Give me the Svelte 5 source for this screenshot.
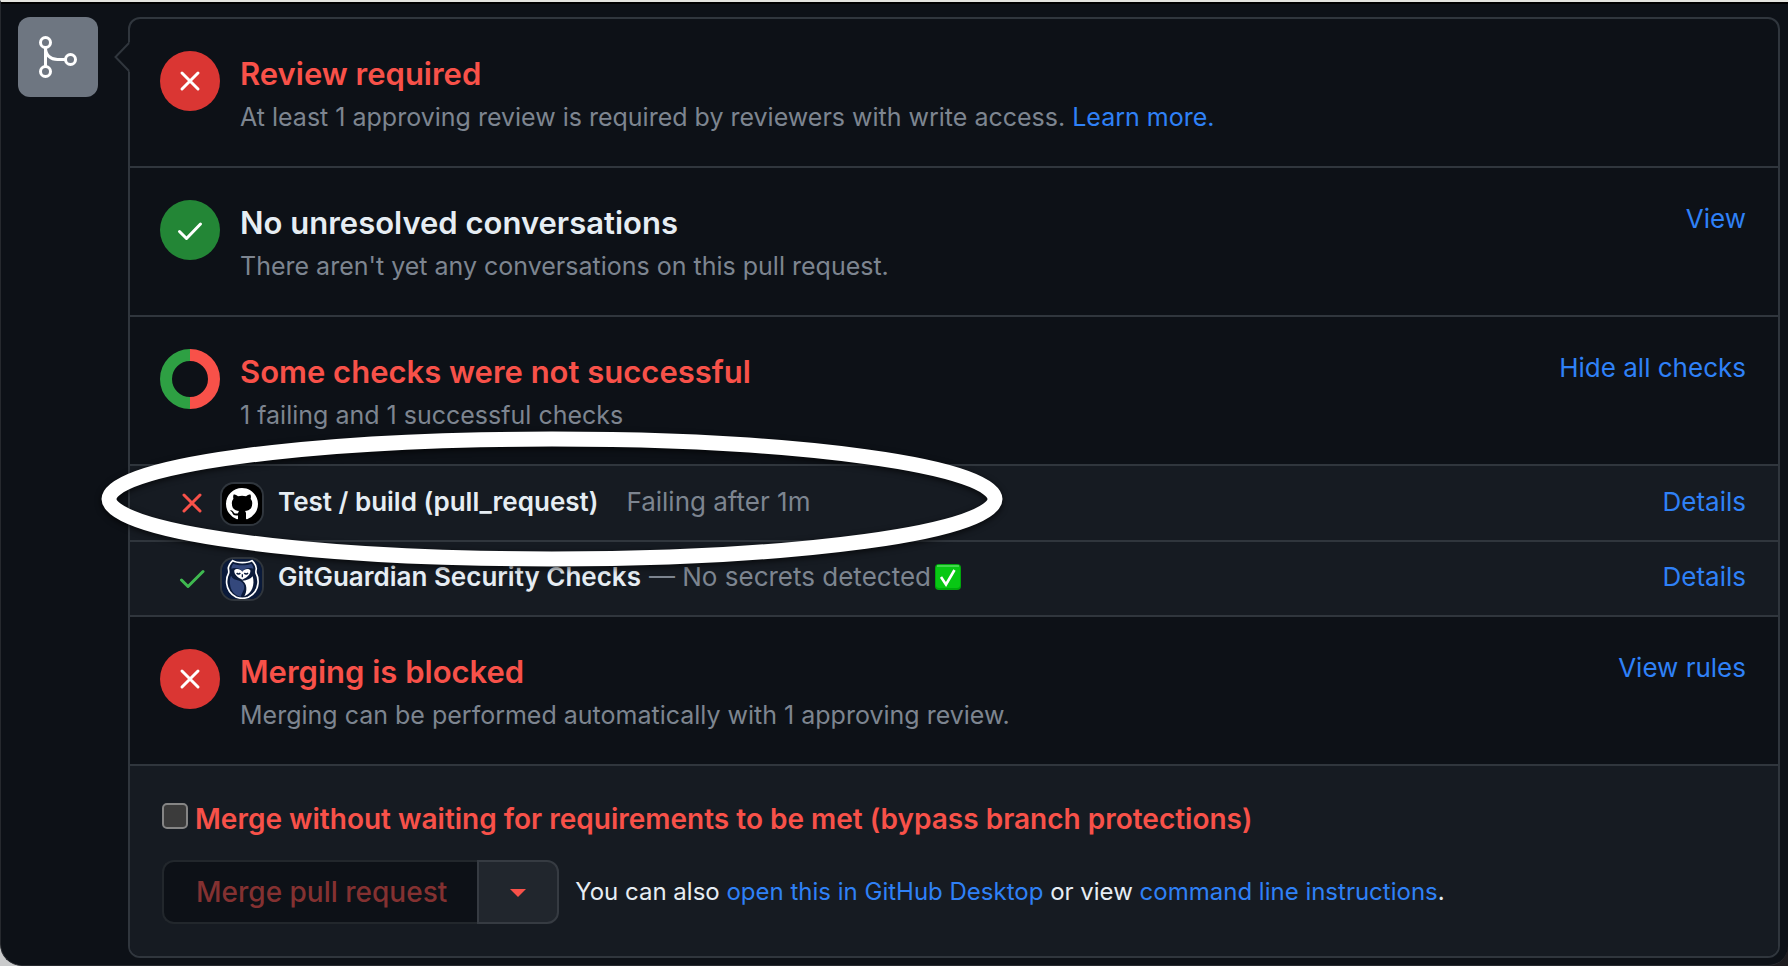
<script>
  const checks = [
    { ok: false, app: 'github', name: 'Test / build (pull_request)', note: 'Failing after 1m' },
    { ok: true, app: 'gitguardian', name: 'GitGuardian Security Checks', note: 'No secrets detected' }
  ];
  let bypass = $state(false);
</script>

{#snippet badge(ok)}
  <span class="badge" class:ok>
    <svg viewBox="0 0 60 60" aria-hidden="true">
      {#if ok}
        <path d="M19.5 31.5l7 7L40.5 24" />
      {:else}
        <path d="M22 22l16 16M38 22L22 38" />
      {/if}
    </svg>
  </span>
{/snippet}

<div class="window">
  <div class="timeline-icon">
    <svg viewBox="0 0 80 80" aria-hidden="true">
      <circle cx="27.5" cy="25.5" r="5" />
      <circle cx="27.5" cy="54.5" r="5" />
      <circle cx="52.5" cy="42.5" r="5" />
      <path d="M27.5 31v18M27.5 31c0 7 5 11.5 12 11.5h8" />
    </svg>
  </div>

  <main class="panel">
    <svg class="pointer" viewBox="0 0 16 30" aria-hidden="true">
      <path class="fill" d="M16 0L1.5 15 16 30z" />
      <path class="edge" d="M15 1L1.500 15 15 29" />
    </svg>

    <section class="item">
      {@render badge(false)}
      <div class="text">
        <h3 class="danger">Review required</h3>
        <p>At least 1 approving review is required by reviewers with write access. <a href="#learn">Learn more.</a></p>
      </div>
    </section>

    <section class="item">
      {@render badge(true)}
      <div class="text">
        <h3>No unresolved conversations</h3>
        <p>There aren't yet any conversations on this pull request.</p>
      </div>
      <a class="action" href="#view">View</a>
    </section>

    <section class="item">
      <svg class="donut" viewBox="0 0 60 60" aria-hidden="true">
        <path class="fail" d="M30 6a24 24 0 0 1 0 48" />
        <path class="pass" d="M30 54a24 24 0 0 1 0-48" />
      </svg>
      <div class="text">
        <h3 class="danger">Some checks were not successful</h3>
        <p>1 failing and 1 successful checks</p>
      </div>
      <button class="action" type="button">Hide all checks</button>
    </section>

    <div class="checks">
      <ul>
        {#each checks as check}
          <li>
            <svg class="state" class:ok={check.ok} viewBox="0 0 26 26" aria-hidden="true">
              {#if check.ok}
                <path d="M2.5 14l6.500 6.500L24 5.500" />
              {:else}
                <path d="M5 4l16 16M21 4L5 20" />
              {/if}
            </svg>
            <span class="app">
              {#if check.app === 'github'}
                <svg viewBox="0 0 40 40" aria-hidden="true">
                  <rect width="40" height="40" fill="#000" />
                  <path
                    transform="translate(4 4) scale(2)"
                    fill="#fff"
                    d="M8 0c4.420 0 8 3.580 8 8a8.013 8.013 0 0 1-5.450 7.590c-.4.080-.55-.17-.55-.38 0-.27.010-1.130.010-2.200 0-.75-.25-1.230-.54-1.480 1.780-.2 3.650-.88 3.650-3.950 0-.88-.31-1.590-.82-2.150.08-.2.360-1.020-.08-2.120 0 0-.67-.22-2.200.820-.64-.18-1.320-.27-2-.27-.68 0-1.360.090-2 .27-1.530-1.030-2.200-.82-2.200-.82-.44 1.100-.16 1.920-.08 2.120-.51.560-.82 1.280-.82 2.150 0 3.060 1.860 3.750 3.640 3.950-.23.2-.44.550-.51 1.070-.46.210-1.610.550-2.330-.66-.15-.24-.6-.83-1.230-.82-.67.010-.27.380.010.530.34.190.730.900.820 1.130.16.450.680 1.310 2.690.940 0 .670.010 1.300.010 1.490 0 .210-.15.450-.55.380A7.995 7.995 0 0 1 0 8c0-4.420 3.580-8 8-8Z"
                  />
                </svg>
              {:else}
                <svg viewBox="0 0 120 120" aria-hidden="true">
                  <rect width="120" height="120" fill="#0a1a3a" />
                  <path
                    fill="#0a1a3a"
                    stroke="#fff"
                    stroke-width="5"
                    d="M32 5c8 5 16 6 29 6s21-1 29-6c7 7 13 15 13 24-1 5-2 8-1 13 5 9 7 20 6 31-2 19-14 34-29 42-6 2-11 3-18 3s-12-1-18-3C28 107 16 92 14 73c-1-11 1-22 6-31 1-5 0-8-1-13 0-9 6-17 13-24z"
                  />
                  <path fill="#34487c" d="M34 14c16 6 38 6 54 0 4 5 6 10 6 15-12-4-25-2-33 8-8-10-21-12-33-8 0-5 2-10 6-15z" />
                  <path fill="#34487c" d="M27 50c4 9 14 13 25 15 14 5 17 17 13 28-4 8-8 15-8 20-19-2-31-18-33-38-1-9 0-18 3-25z" />
                  <path fill="#fff" d="M61 65c14-1 25-5 31-13 7 25-1 50-25 60 9-16 9-38-6-47z" />
                  <path fill="#fff" d="M61 38c-6-9-19-10-24-4-2 13 11 22 24 28 13-6 26-15 24-28-5-6-18-5-24 4z" />
                  <path fill="none" stroke="#0a1a3a" stroke-width="4" d="M44 42c3 4 8 4 11 0M67 42c3 4 8 4 11 0M61 46v9" />
                </svg>
              {/if}
            </span>
            <strong>{check.name}</strong>
            {#if check.ok}
              <span class="note">— {check.note}</span>
              <svg class="tick" viewBox="0 0 26 26" role="img" aria-label="passed">
                <rect width="26" height="26" rx="4" fill="#00a80c" />
                <rect x="1" y="1" width="24" height="23" rx="3" fill="#08c814" />
                <path d="M2 2h22" stroke="#7fe487" stroke-width="1" />
                <path d="M6 13l5 7.500L19.500 6" fill="none" stroke="#fff" stroke-width="2.600" />
              </svg>
            {:else}
              <span class="note late">{check.note}</span>
            {/if}
            <a class="details" href="#details">Details</a>
          </li>
        {/each}
      </ul>
      <svg class="ring" viewBox="0 0 910 150" aria-hidden="true">
        <ellipse cx="455" cy="75" rx="443" ry="60" />
      </svg>
    </div>

    <section class="item">
      {@render badge(false)}
      <div class="text">
        <h3 class="danger">Merging is blocked</h3>
        <p>Merging can be performed automatically with 1 approving review.</p>
      </div>
      <a class="action" href="#rules">View rules</a>
    </section>

    <footer>
      <label>
        <input type="checkbox" bind:checked={bypass} />
        <span>Merge without waiting for requirements to be met (bypass branch protections)</span>
      </label>
      <div class="merge-row">
        <div class="group">
          <button class="merge" type="button" disabled={!bypass}>Merge pull request</button>
          <button class="caret" type="button" aria-label="Select merge method">
            <svg viewBox="0 0 16 8" aria-hidden="true"><path d="M0 0h16L8 8z" /></svg>
          </button>
        </div>
        <p>You can also <a href="#desktop">open this in GitHub Desktop</a> or view <a href="#cli">command line instructions</a>.</p>
      </div>
    </footer>
  </main>
</div>

<style>
  :global(body) {
    margin: 0;
    background: linear-gradient(90deg, #c9cacb 50%, #1d1b1f 50%);
  }
  .window {
    box-sizing: border-box;
    min-height: 100vh;
    display: flex;
    align-items: flex-start;
    gap: 30px;
    padding: 15px 8px 7px 17px;
    border: solid #26292e;
    border-width: 2px 0 1px 1px;
    border-top-color: #e4e4df;
    border-radius: 0 0 20px 22px;
    box-shadow: inset 0 2px #000;
    background: #0d1117;
    color: #e6edf3;
    font-family: Inter, 'Liberation Sans', sans-serif;
    font-size: 26px;
    line-height: 36px;
  }
  a,
  .action {
    color: #2f81f7;
    text-decoration: none;
  }
  h3,
  p,
  ul {
    margin: 0;
    padding: 0;
  }
  button {
    font: inherit;
    cursor: pointer;
  }
  .timeline-icon {
    flex: none;
    width: 80px;
    height: 80px;
    border-radius: 12px;
    background: #6e7681;
  }
  .timeline-icon svg {
    display: block;
    fill: none;
    stroke: #fff;
    stroke-width: 3;
  }
  .panel {
    position: relative;
    flex: 1;
    min-width: 0;
    border: 2px solid #30363d;
    border-radius: 12px;
  }
  .pointer {
    position: absolute;
    left: -16px;
    top: 23px;
    width: 16px;
    height: 30px;
  }
  .pointer .fill {
    fill: #0d1117;
  }
  .pointer .edge {
    fill: none;
    stroke: #30363d;
    stroke-width: 2;
  }
  .item {
    display: flex;
    align-items: flex-start;
    gap: 20px;
    padding: 32px 32px 31px 30px;
    border-bottom: 2px solid #30363d;
  }
  .text {
    flex: 1;
    min-width: 0;
  }
  h3 {
    padding-bottom: 2px;
    font-size: 31px;
    font-weight: 600;
    line-height: 46px;
  }
  .danger {
    color: #f85149;
  }
  .text p {
    color: #7d8590;
    font-size: 25px;
  }
  .action {
    padding: 1px 0 0;
    border: 0;
    background: none;
  }
  .badge,
  .donut {
    flex: none;
    width: 60px;
    height: 60px;
  }
  .badge {
    border-radius: 50%;
    background: #da3633;
  }
  .badge.ok {
    background: #238636;
  }
  .badge svg {
    display: block;
    fill: none;
    stroke: #fff;
    stroke-width: 3;
    stroke-linecap: round;
    stroke-linejoin: round;
  }
  .donut {
    fill: none;
    stroke-width: 12;
  }
  .donut .fail {
    stroke: #f85149;
  }
  .donut .pass {
    stroke: #2ea043;
  }
  .checks {
    position: relative;
    padding-top: 1px;
    background: #161b22;
  }
  .checks li {
    display: flex;
    align-items: center;
    height: 73px;
    padding: 0 32px 0 49px;
    border-bottom: 2px solid #30363d;
  }
  .state {
    width: 26px;
    height: 26px;
    margin-right: 17px;
    fill: none;
    stroke: #f85149;
    stroke-width: 3;
    stroke-linecap: round;
    stroke-linejoin: round;
  }
  .state.ok {
    stroke: #3fb950;
  }
  .app {
    width: 40px;
    height: 40px;
    margin-right: 16px;
    border-radius: 12px;
    overflow: hidden;
    box-shadow: 0 0 0 2px #30363d;
  }
  .app svg {
    display: block;
  }
  strong,
  .note,
  .tick,
  .details {
    padding-bottom: 4px;
  }
  strong {
    font-weight: 600;
  }
  .note {
    margin-left: 8px;
    color: #7d8590;
  }
  .note.late {
    margin-left: 28px;
  }
  .tick {
    width: 26px;
    height: 26px;
    margin-left: 4px;
  }
  .details {
    margin-left: auto;
  }
  .ring {
    position: absolute;
    left: -33px;
    top: -42px;
    width: 910px;
    height: 150px;
    fill: none;
    stroke: #fff;
    stroke-width: 15;
    filter: drop-shadow(0 2px 3px rgb(0 0 0 / 70%));
    pointer-events: none;
  }
  footer {
    padding: 33px 32px 32px;
    border-radius: 0 0 10px 10px;
    background: #161b22;
  }
  label {
    display: flex;
    align-items: center;
    gap: 7px;
    color: #f85149;
    font-size: 28px;
    font-weight: 600;
    line-height: 40px;
  }
  input {
    appearance: none;
    box-sizing: border-box;
    flex: none;
    width: 26px;
    height: 26px;
    margin: 0 0 6px;
    border: 2px solid #858585;
    border-radius: 5px;
    background: #3b3b3b;
  }
  input:checked {
    background: #2f81f7;
  }
  .merge-row {
    display: flex;
    align-items: center;
    gap: 16px;
    margin-top: 21px;
    font-size: 24px;
  }
  .group {
    display: flex;
    flex: none;
    height: 64px;
  }
  .merge {
    padding: 0 30px 0 32px;
    border: 2px solid #22272c;
    border-right: 0;
    border-radius: 12px 0 0 12px;
    background: #0d1117;
    color: #f85149;
    font-size: 28px;
    font-weight: 500;
  }
  .merge:disabled {
    color: #843131;
  }
  .caret {
    box-sizing: border-box;
    width: 82px;
    padding: 0;
    border: 2px solid #363b42;
    border-radius: 0 12px 12px 0;
    background: #21262d;
  }
  .caret svg {
    display: block;
    width: 16px;
    height: 8px;
    margin: 2px auto 0;
    fill: #f85149;
  }
</style>
